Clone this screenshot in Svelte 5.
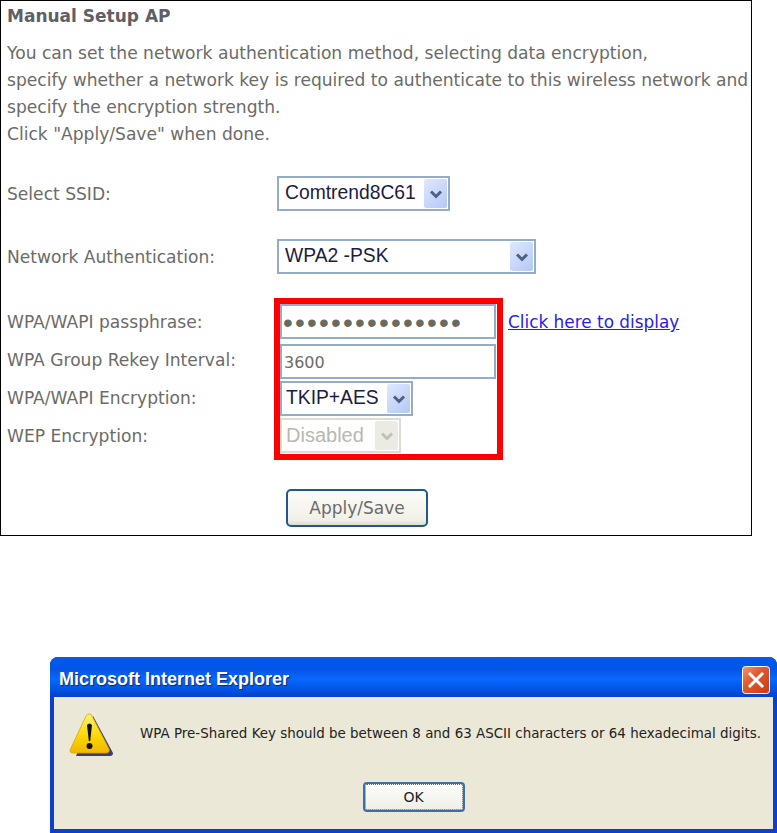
<script>
  const ssids = ['Comtrend8C61'];
  const authModes = ['WPA2 -PSK'];
  const encryptions = ['TKIP+AES'];

  const chevron = 'M5 7.500 L10 12.500 L15 7.500';
</script>

<div class="page">
  <section class="panel">
    <h1>Manual Setup AP</h1>
    <p class="intro">
      You can set the network authentication method, selecting data encryption,<br />
      specify whether a network key is required to authenticate to this wireless network and<br />
      specify the encryption strength.<br />
      Click "Apply/Save" when done.
    </p>

    <div class="row first">
      <label for="ssid">Select SSID:</label>
      <div class="sel ssid">
        <select id="ssid">
          {#each ssids as s}<option>{s}</option>{/each}
        </select>
        <span class="arrow"><svg viewBox="0 0 20 20" width="20" height="20"><path d={chevron} /></svg></span>
      </div>
    </div>

    <div class="row second">
      <label for="auth">Network Authentication:</label>
      <div class="sel auth">
        <select id="auth">
          {#each authModes as m}<option>{m}</option>{/each}
        </select>
        <span class="arrow"><svg viewBox="0 0 20 20" width="20" height="20"><path d={chevron} /></svg></span>
      </div>
    </div>

    <div class="wpa">
      <div class="labels">
        <label for="pass">WPA/WAPI passphrase:</label>
        <label for="rekey">WPA Group Rekey Interval:</label>
        <label for="enc">WPA/WAPI Encryption:</label>
        <label for="wep">WEP Encryption:</label>
      </div>
      <div class="redbox">
        <input id="pass" class="text pass" type="password" value="123456789012345" />
        <input id="rekey" class="text" type="text" value="3600" />
        <div class="sel enc">
          <select id="enc">
            {#each encryptions as e}<option>{e}</option>{/each}
          </select>
          <span class="arrow"><svg viewBox="0 0 20 20" width="20" height="20"><path d={chevron} /></svg></span>
        </div>
        <div class="sel wep off">
          <select id="wep" disabled><option>Disabled</option></select>
          <span class="arrow"><svg viewBox="0 0 20 20" width="20" height="20"><path d={chevron} /></svg></span>
        </div>
      </div>
      <a href="#display" class="show">Click here to display</a>
    </div>

    <div class="actions">
      <button class="apply">Apply/Save</button>
    </div>
  </section>

  <section class="dialog">
    <header class="titlebar">
      <span class="title">Microsoft Internet Explorer</span>
      <button class="close" aria-label="Close">
        <svg viewBox="0 0 28 28" width="28" height="28">
          <defs>
            <linearGradient id="closeBg" x1="0" y1="0" x2="1" y2="1">
              <stop offset="0" stop-color="#ee9a7c" />
              <stop offset="0.4" stop-color="#e25a2c" />
              <stop offset="1" stop-color="#c43c12" />
            </linearGradient>
          </defs>
          <rect x="0.5" y="0.5" width="27" height="27" rx="3" fill="url(#closeBg)" stroke="#fff" stroke-width="1" />
          <path d="M8 8 L20 20 M20 8 L8 20" stroke="#fff" stroke-width="3" stroke-linecap="square" />
        </svg>
      </button>
    </header>
    <div class="body">
      <div class="message">
        <svg class="warn" viewBox="0 0 44 44" width="44" height="44">
          <defs>
            <linearGradient id="warnBg" x1="0" y1="0" x2="0" y2="1">
              <stop offset="0" stop-color="#fff27a" />
              <stop offset="0.55" stop-color="#fdd800" />
              <stop offset="1" stop-color="#f2b600" />
            </linearGradient>
          </defs>
          <path d="M24 3 L44 40 Q44 43 41 43 L7 43 Z" fill="#3c3c78" />
          <path d="M20 1 Q22 0 23 3 L40 36 Q41 40 37 40 L4 40 Q0 40 1.500 36 L17 3 Q18 1 20 1 Z" fill="url(#warnBg)" stroke="#d9a400" stroke-width="0.8" />
          <path d="M18 12 Q20.500 9 23 12 L21.200 28 L19.800 28 Z" fill="#111" />
          <circle cx="20.500" cy="33" r="3" fill="#111" />
        </svg>
        <p>WPA Pre-Shared Key should be between 8 and 63 ASCII characters or 64 hexadecimal digits.</p>
      </div>
      <div class="ok-row">
        <button class="ok">OK</button>
      </div>
    </div>
  </section>
</div>

<style>
  :global(body) {
    background: #fff;
  }

  .page {
    width: 777px;
    height: 833px;
    overflow: hidden;
    font-family: "DejaVu Sans", Verdana, sans-serif;
  }

  .panel {
    box-sizing: border-box;
    width: 752px;
    height: 536px;
    border: 1px solid #000;
    padding: 0 0 0 6px;
    color: #6b6b68;
    font-size: 17.1px;
  }

  h1 {
    margin: 3px 0 0;
    font-size: 17px;
    line-height: 24px;
    font-weight: 700;
    color: #5f5f66;
  }

  .intro {
    margin: 12px 0 0;
    line-height: 27px;
    white-space: nowrap;
  }

  .row {
    display: flex;
    align-items: center;
  }

  .row label {
    width: 270px;
  }

  .first {
    margin-top: 28px;
  }

  .second {
    margin-top: 28px;
  }

  .sel {
    position: relative;
    box-sizing: border-box;
    height: 35px;
    border: 2px solid #93adc8;
    background: #fff;
  }

  .sel select {
    appearance: none;
    border: none;
    background: transparent;
    width: 100%;
    height: 100%;
    padding: 0 0 2px 6px;
    font-family: "Liberation Sans", Arial, sans-serif;
    font-size: 19.3px;
    color: #1c1c40;
  }

  .arrow {
    position: absolute;
    top: 1px;
    right: 1px;
    bottom: 1px;
    width: 23px;
    display: flex;
    align-items: center;
    justify-content: center;
    border-radius: 2px;
    background: linear-gradient(135deg, #dfe8fd, #b4c8f6);
    pointer-events: none;
  }

  .arrow path {
    fill: none;
    stroke: #4d6185;
    stroke-width: 3;
  }

  .ssid {
    width: 173px;
  }

  .auth {
    width: 259px;
  }

  .wpa {
    display: flex;
    align-items: flex-start;
    margin-top: 24px;
  }

  .labels {
    display: grid;
    grid-auto-rows: 38px;
    width: 267px;
    padding-top: 5px;
    align-items: center;
  }

  .redbox {
    box-sizing: border-box;
    width: 229px;
    height: 162px;
    border: 6px solid #f00;
    display: flex;
    flex-direction: column;
    align-items: flex-start;
    gap: 2px;
    margin-right: 5px;
  }

  .text {
    box-sizing: border-box;
    width: 216px;
    height: 35px;
    flex: none;
    margin-right: -1px;
    border: 2px solid #93adc8;
    padding: 1px 0 0 2px;
    font-family: "DejaVu Sans", sans-serif;
    font-size: 16px;
    color: #6b6b68;
    outline: none;
    background: #fff;
  }

  .pass {
    margin-bottom: 3px;
    font-family: "Liberation Sans", sans-serif;
    font-size: 28px;
    letter-spacing: 2.200px;
    padding: 2px 0 0 1px;
    color: #6a6a60;
  }

  .enc {
    width: 133px;
    flex: none;
  }

  .enc select,
  .wep select {
    padding-left: 4px;
  }

  .wep {
    width: 121px;
    flex: none;
  }

  .off {
    border-color: #dcdcd0;
  }

  .off select {
    font-size: 20px;
    color: #b8b8b0;
    opacity: 1;
  }

  .off .arrow {
    background: #ebebe4;
  }

  .off .arrow path {
    stroke: #c0c0b8;
  }

  .show {
    margin-top: 14px;
    color: #2a1bf0;
    font-size: 16.900px;
    white-space: nowrap;
  }

  .actions {
    margin: 29px 0 0 279px;
  }

  .apply {
    box-sizing: border-box;
    width: 142px;
    height: 38px;
    border: 2px solid #1f5a8c;
    border-radius: 5px;
    background: linear-gradient(#fcfcf9, #f1f0e8 85%, #dedccf);
    font-family: "DejaVu Sans", sans-serif;
    font-size: 17px;
    color: #6b6b68;
  }

  .dialog {
    box-sizing: border-box;
    width: 727px;
    height: 176px;
    margin: 121px 0 0 50px;
    background: #0a3fd0;
    border-radius: 8px 8px 0 0;
    padding: 0 4px 4px;
    display: flex;
    flex-direction: column;
  }

  .titlebar {
    box-sizing: border-box;
    height: 40px;
    margin: 0 -4px;
    padding: 5px 7px 0 9px;
    flex: none;
    display: flex;
    align-items: center;
    justify-content: space-between;
    border-radius: 8px 8px 0 0;
    background: linear-gradient(#0a5ae6, #0058ee 12%, #0454e4 30%, #0a68ff 55%, #0050e0 85%, #0040c8);
  }

  .title {
    color: #fff;
    font-family: "Liberation Sans", sans-serif;
    font-weight: 700;
    font-size: 18px;
    text-shadow: 1px 1px 1px #0a2a80;
  }

  .close {
    width: 28px;
    height: 28px;
    padding: 0;
    border: none;
    background: none;
    display: block;
  }

  .close svg {
    display: block;
  }

  .body {
    flex: 1;
    background: #ebe8d8;
    display: flex;
    flex-direction: column;
  }

  .message {
    display: flex;
    align-items: flex-start;
    padding: 16px 0 0 15px;
    height: 65px;
    box-sizing: content-box;
  }

  .warn {
    flex: none;
  }

  .message p {
    margin: 12px 0 0 27px;
    font-family: "DejaVu Sans", sans-serif;
    font-size: 13.430px;
    line-height: 18px;
    color: #222;
    white-space: nowrap;
  }

  .ok-row {
    display: flex;
    justify-content: center;
    padding-top: 4px;
  }

  .ok {
    box-sizing: border-box;
    width: 102px;
    height: 30px;
    border: 2px solid #3c6ea8;
    border-radius: 4px;
    background: linear-gradient(#fdfdfb, #efeee6);
    outline: 1px dotted #666;
    outline-offset: -3px;
    font-family: "DejaVu Sans", sans-serif;
    font-size: 14px;
    color: #222;
  }
</style>
